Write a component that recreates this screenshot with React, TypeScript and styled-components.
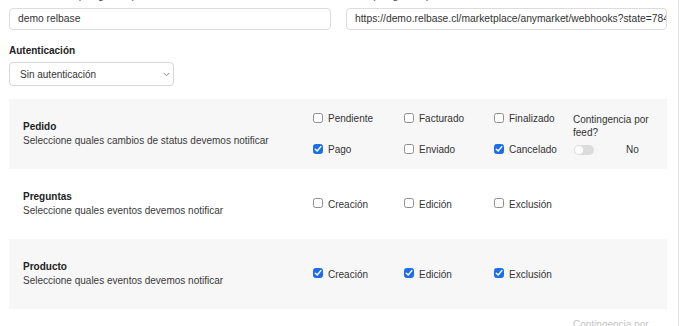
import React from "react";
import styled, { createGlobalStyle } from "styled-components";

const Global = createGlobalStyle`
  html, body { margin: 0; padding: 0; background: #fff; }
  body { font-family: "Liberation Sans", Arial, Helvetica, sans-serif; color: #333; }
  * { box-sizing: border-box; }
`;

const Page = styled.div`
  width: 679px;
  height: 326px;
  overflow: hidden;
  border-right: 1px solid #e3e3e3;
  padding: 0 11px 0 9px;
`;

const TopRow = styled.div`
  display: grid;
  grid-template-columns: 322px 321px;
  column-gap: 15px;
  margin-top: -12px;
`;

const Field = styled.div`
  display: flex;
  flex-direction: column;
`;

const TopLabel = styled.label`
  font-size: 11px;
  line-height: 14px;
  height: 14px;
  margin-bottom: 6px;
  color: #444;
  padding-left: 1px;
`;

const TextInput = styled.div`
  height: 22px;
  border: 1px solid #dcdcdc;
  border-radius: 4px;
  padding: 0 8px;
  font-size: 10.3px;
  line-height: 20px;
  color: #333;
  white-space: nowrap;
  overflow: hidden;
`;

const BoldLabel = styled.div`
  font-size: 10px;
  font-weight: bold;
  line-height: 14px;
  color: #222;
  margin-top: 14px;
  margin-bottom: 4px;
`;

const Select = styled.div`
  width: 165px;
  height: 24px;
  border: 1px solid #d6d6d6;
  border-radius: 4px;
  padding: 0 3px 0 10px;
  display: flex;
  align-items: center;
  justify-content: space-between;
  font-size: 10px;
  color: #333;
  margin-bottom: 13px;
`;

const Section = styled.div<{ $shade?: boolean }>`
  height: 70px;
  background: ${(p) => (p.$shade ? "#f7f7f7" : "#fff")};
  display: grid;
  grid-template-columns: 289px 1fr;
  align-items: center;
  padding-left: 14px;
`;

const Info = styled.div`
  display: flex;
  flex-direction: column;
  font-size: 10px;
  line-height: 14px;
`;

const Title = styled.div`
  font-weight: bold;
  color: #222;
`;

const Subtitle = styled.div`
  color: #3a3a3a;
`;

const Options = styled.div`
  display: flex;
  align-items: flex-start;
`;

const CheckGrid = styled.div`
  display: grid;
  grid-template-columns: 91px 90px 80px;
  grid-auto-rows: 14px;
  row-gap: 17px;
`;

const CheckItem = styled.label`
  display: flex;
  align-items: center;
  gap: 5px;
  font-size: 10px;
  color: #333;
  padding-left: 1px;
`;

const Box = styled.span<{ $on?: boolean }>`
  width: 10px;
  height: 10px;
  border-radius: 2.5px;
  border: 1px solid ${(p) => (p.$on ? "#1c6ee8" : "#8e8e8e")};
  background: ${(p) => (p.$on ? "#1c6ee8" : "#fff")};
  display: flex;
  align-items: center;
  justify-content: center;
  flex: none;
  margin-top: -2px;
`;

const ContCol = styled.div<{ $faded?: boolean }>`
  display: flex;
  flex-direction: column;
  font-size: 10px;
  line-height: 13px;
  color: ${(p) => (p.$faded ? "#c4c4c4" : "#333")};
  width: 80px;
  margin-top: 1px;
`;

const ToggleRow = styled.div`
  display: flex;
  align-items: center;
  margin-top: 5px;
  height: 12px;
  padding-left: 1px;
`;

const Toggle = styled.span`
  position: relative;
  width: 20px;
  height: 10px;
  border-radius: 5px;
  background: #dcdcdc;
  flex: none;
  &::after {
    content: "";
    position: absolute;
    left: 1px;
    top: 1px;
    width: 8px;
    height: 8px;
    border-radius: 50%;
    background: #fff;
  }
`;

const ToggleText = styled.span`
  margin-left: 32px;
`;

const Tail = styled.div`
  display: grid;
  grid-template-columns: 289px 1fr;
  padding-left: 14px;
  padding-top: 8px;
`;

const TailOptions = styled.div`
  padding-left: 261px;
`;

const Check = ({ on, label }: { on?: boolean; label: string }) => (
  <CheckItem>
    <Box $on={on}>
      {on && (
        <svg width="8" height="8" viewBox="0 0 8 8">
          <path d="M1.3 4.2 L3.2 6 L6.8 1.6" fill="none" stroke="#fff" strokeWidth="1.5" strokeLinecap="round" strokeLinejoin="round" />
        </svg>
      )}
    </Box>
    {label}
  </CheckItem>
);

export default function App() {
  return (
    <>
      <Global />
      <Page>
        <TopRow>
          <Field>
            <TopLabel>Identificación (obligatorio)</TopLabel>
            <TextInput>demo relbase</TextInput>
          </Field>
          <Field>
            <TopLabel>URL (obligatorio)</TopLabel>
            <TextInput>https://demo.relbase.cl/marketplace/anymarket/webhooks?state=784c2a91f0</TextInput>
          </Field>
        </TopRow>
        <BoldLabel>Autenticación</BoldLabel>
        <Select>
          <span>Sin autenticación</span>
          <svg width="7" height="5" viewBox="0 0 7 5">
            <path d="M0.8 1 L3.5 3.8 L6.2 1" fill="none" stroke="#888" strokeWidth="1" />
          </svg>
        </Select>

        <Section $shade>
          <Info>
            <Title>Pedido</Title>
            <Subtitle>Seleccione quales cambios de status devemos notificar</Subtitle>
          </Info>
          <Options>
            <CheckGrid>
              <Check label="Pendiente" />
              <Check label="Facturado" />
              <Check label="Finalizado" />
              <Check on label="Pago" />
              <Check label="Enviado" />
              <Check on label="Cancelado" />
            </CheckGrid>
            <ContCol>
              <span>Contingencia por feed?</span>
              <ToggleRow>
                <Toggle />
                <ToggleText>No</ToggleText>
              </ToggleRow>
            </ContCol>
          </Options>
        </Section>

        <Section>
          <Info>
            <Title>Preguntas</Title>
            <Subtitle>Seleccione quales eventos devemos notificar</Subtitle>
          </Info>
          <Options>
            <CheckGrid>
              <Check label="Creación" />
              <Check label="Edición" />
              <Check label="Exclusión" />
            </CheckGrid>
          </Options>
        </Section>

        <Section $shade>
          <Info>
            <Title>Producto</Title>
            <Subtitle>Seleccione quales eventos devemos notificar</Subtitle>
          </Info>
          <Options>
            <CheckGrid>
              <Check on label="Creación" />
              <Check on label="Edición" />
              <Check on label="Exclusión" />
            </CheckGrid>
          </Options>
        </Section>

        <Tail>
          <div />
          <TailOptions>
            <ContCol $faded>
              <span>Contingencia por feed?</span>
            </ContCol>
          </TailOptions>
        </Tail>
      </Page>
    </>
  );
}
